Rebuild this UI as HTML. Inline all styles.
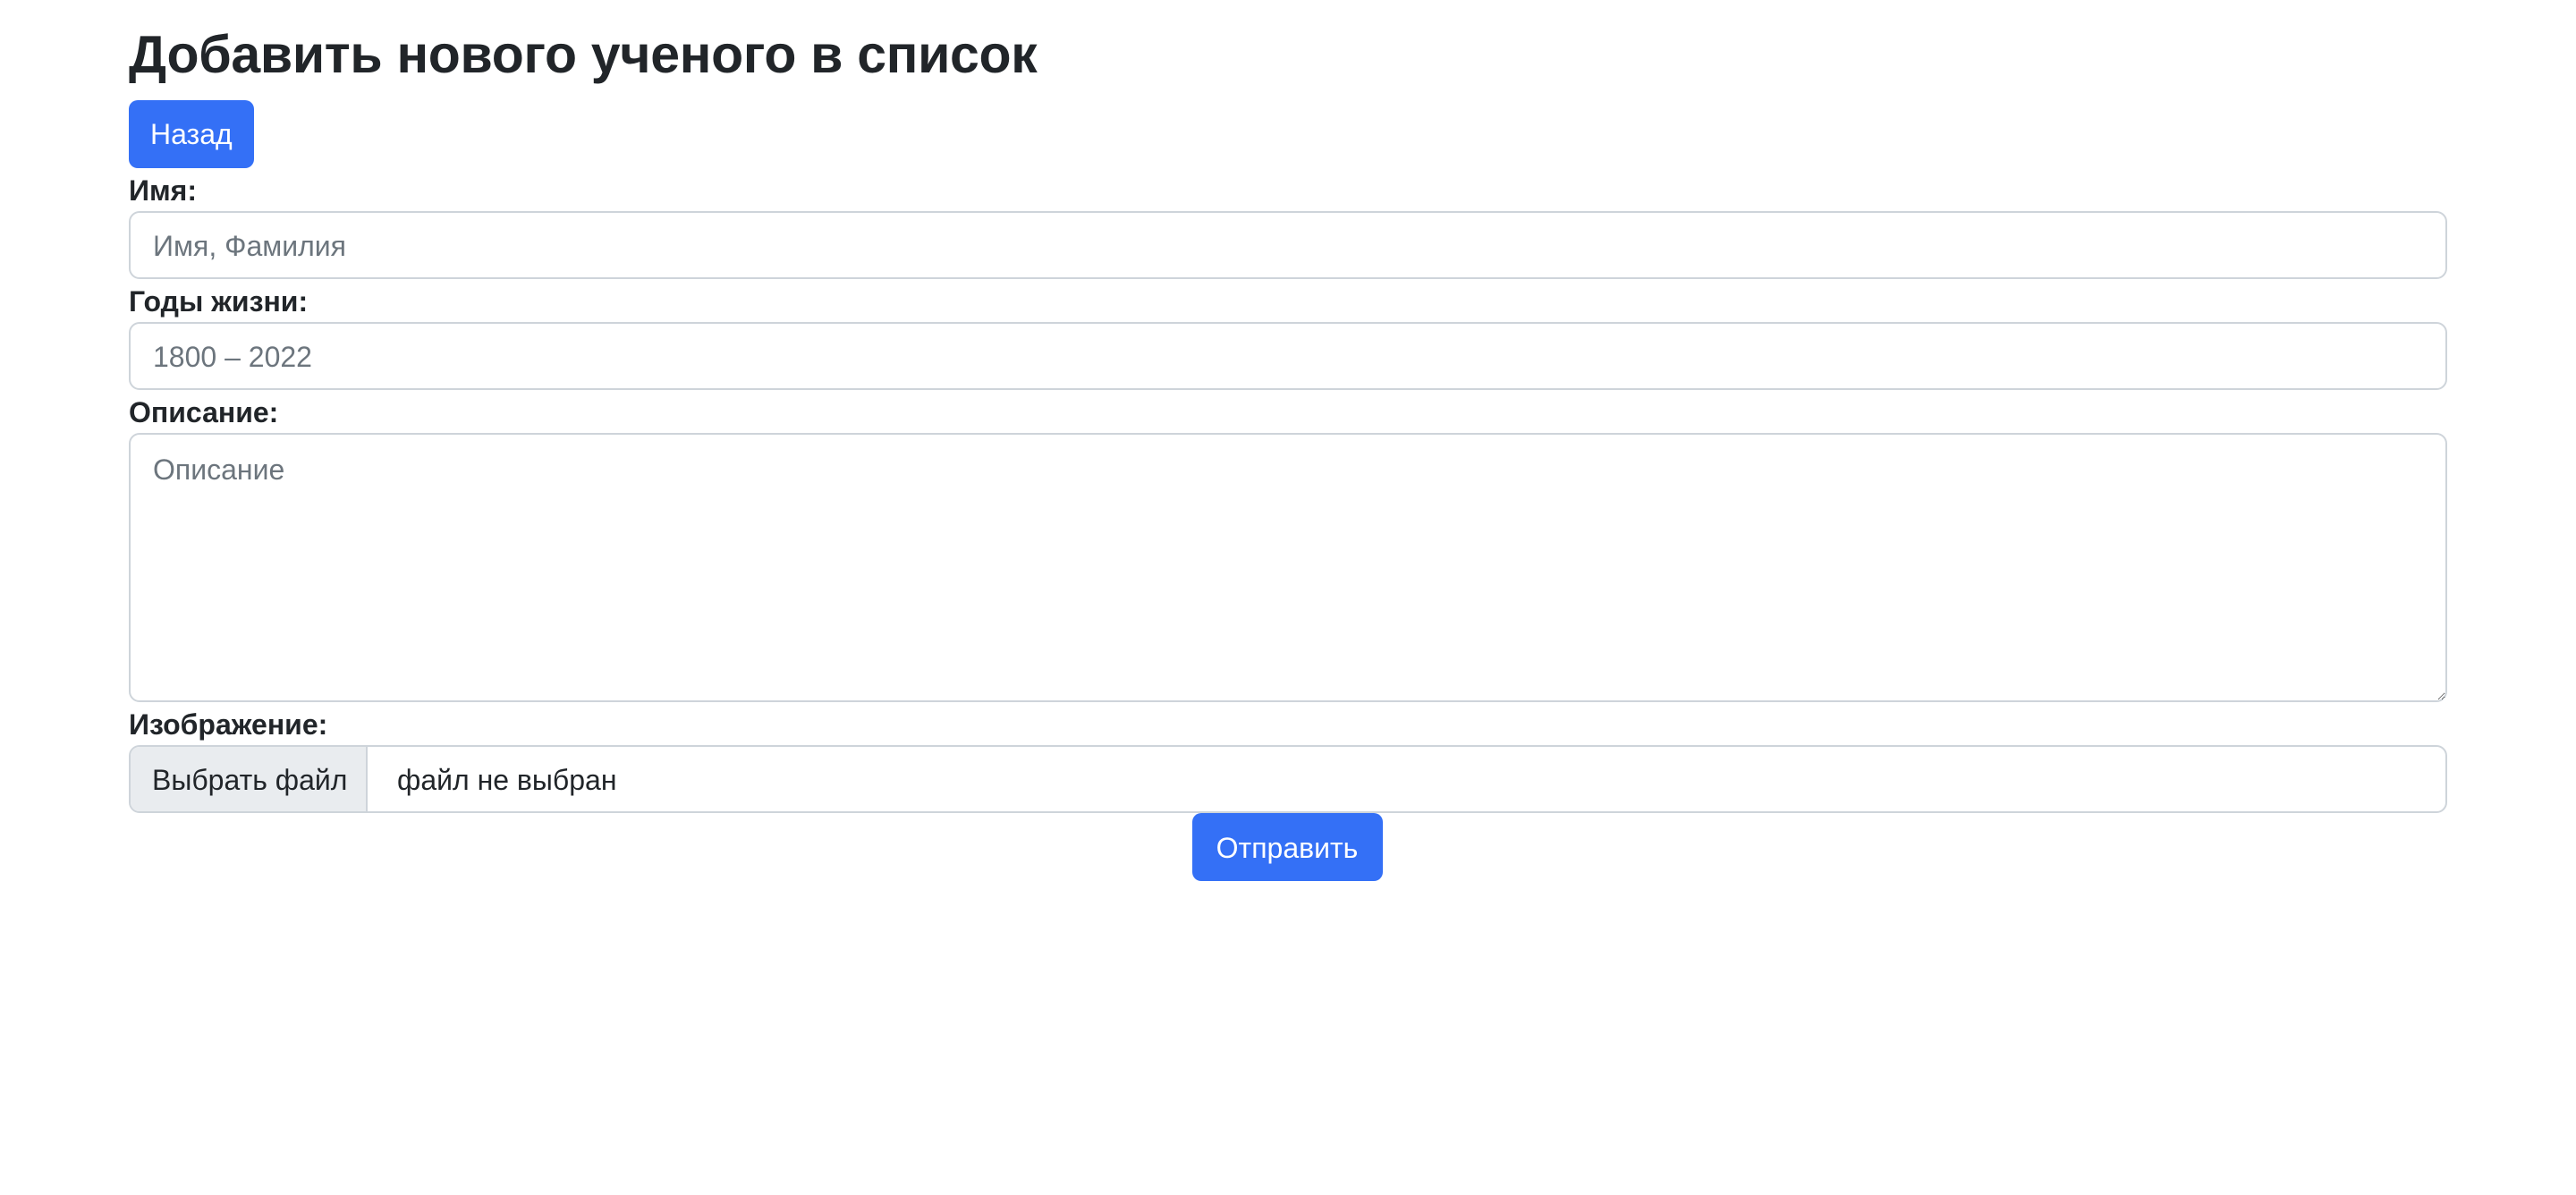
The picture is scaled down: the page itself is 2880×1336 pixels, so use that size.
<!DOCTYPE html>
<html><head><meta charset="utf-8"><style>
html,body{margin:0;padding:0;background:#fff;width:2880px;height:1336px;overflow:hidden}
body{font-family:"Liberation Sans",Arial,sans-serif;color:#212529;font-size:32px}
.wrap{position:absolute;left:144px;width:2592px;top:0}
h1{margin:0;height:112px;box-sizing:border-box;padding-top:27px;font-size:59px;line-height:69px;font-weight:bold;white-space:nowrap;letter-spacing:-0.3px}
.btn{display:inline-block;background:#3470f6;color:#fff;border-radius:10px;font-size:32px;line-height:48px;padding:14px 24px;box-sizing:border-box;height:76px}
label{display:block;font-weight:bold;height:48px;line-height:50px;font-size:32px}
.inp{box-sizing:border-box;width:2592px;height:76px;border:2px solid #ced4da;border-radius:12px;padding:0 25px;line-height:74px;color:#6c757d;font-size:32px}
textarea{display:block;box-sizing:border-box;width:2592px;height:301px;border:2px solid #ced4da;border-radius:12px;padding:15px 25px;font-family:"Liberation Sans",Arial,sans-serif;font-size:32px;line-height:48px;margin:0;outline:none;resize:vertical}
textarea::placeholder{color:#6c757d}
.file{display:flex;box-sizing:border-box;width:2592px;height:76px;border:2px solid #ced4da;border-radius:12px;overflow:hidden;line-height:74px;font-size:32px}
.file .b{background:#e9ecef;width:265px;border-right:2px solid #ced4da;padding-left:24px;box-sizing:border-box}
.file .t{padding-left:33px}
</style></head><body>
<div class="wrap">
<h1>Добавить нового ученого в список</h1>
<div class="btn">Назад</div>
<label>Имя:</label>
<div class="inp">Имя, Фамилия</div>
<label>Годы жизни:</label>
<div class="inp">1800 – 2022</div>
<label>Описание:</label>
<textarea placeholder="Описание"></textarea>
<label>Изображение:</label>
<div class="file"><div class="b">Выбрать файл</div><div class="t">файл не выбран</div></div>
<div style="text-align:center"><div class="btn" style="width:213px;text-align:center;padding:15px 0;position:relative;left:-1px">Отправить</div></div>
</div>
</body></html>
